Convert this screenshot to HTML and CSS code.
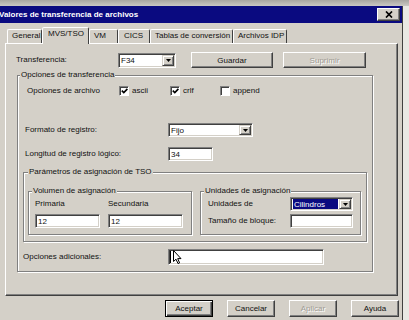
FILE: index.html
```html
<!DOCTYPE html>
<html lang="es">
<head>
<meta charset="utf-8">
<title>Valores de transferencia de archivos</title>
<link rel="stylesheet" href="styles.css">
</head>
<body>
<div class="backdrop"></div>
<div class="dialog">
  <div class="titlebar">
    <span class="title">Valores de transferencia de archivos</span>
    <button class="close" type="button"><svg width="8" height="7" viewBox="0 0 8 7"><path d="M1 0.5 L7 6.5 M7 0.5 L1 6.5" stroke="#000" stroke-width="1.7" fill="none"/></svg></button>
  </div>
  <div class="body">
    <div class="tabs">
      <div class="tab t-general">General</div>
      <div class="tab active t-mvs">MVS/TSO</div>
      <div class="tab t-vm">VM</div>
      <div class="tab t-cics">CICS</div>
      <div class="tab t-tablas">Tablas de conversión</div>
      <div class="tab t-idp">Archivos IDP</div>
    </div>
    <div class="panel">
      <div class="row row-transfer">
        <span class="lbl lbl-transfer">Transferencia:</span>
        <div class="combo combo-f34"><span class="combo-text">F34</span><span class="combo-btn"><svg width="5" height="3" viewBox="0 0 5 3"><path d="M0 0H5L2.5 3Z" fill="#000"/></svg></span></div>
        <button class="btn btn-guardar" type="button">Guardar</button>
        <button class="btn btn-suprimir" type="button" disabled>Suprimir</button>
      </div>
      <fieldset class="group group-opts">
        <legend class="legend legend-opts">Opciones de transferencia</legend>
        <div class="opts-body">
          <div class="row row-archivo">
            <span class="lbl lbl-archivo">Opciones de archivo</span>
            <span class="check check-ascii"><span class="box"><svg width="7" height="6" viewBox="0 0 7 6"><path d="M0.8 2.6 L2.8 4.6 L6.4 0.9" stroke="#000" stroke-width="1.6" fill="none"/></svg></span>ascii</span>
            <span class="check check-crlf"><span class="box"><svg width="7" height="6" viewBox="0 0 7 6"><path d="M0.8 2.6 L2.8 4.6 L6.4 0.9" stroke="#000" stroke-width="1.6" fill="none"/></svg></span>crlf</span>
            <span class="check"><span class="box"></span>append</span>
          </div>
          <div class="row row-formato">
            <span class="lbl lbl-form">Formato de registro:</span>
            <div class="combo combo-fijo"><span class="combo-text">Fijo</span><span class="combo-btn"><svg width="5" height="3" viewBox="0 0 5 3"><path d="M0 0H5L2.5 3Z" fill="#000"/></svg></span></div>
          </div>
          <div class="row row-longitud">
            <span class="lbl lbl-form">Longitud de registro lógico:</span>
            <div class="field field-34">34</div>
          </div>
          <fieldset class="group group-params">
            <legend class="legend legend-params">Parámetros de asignación de TSO</legend>
            <div class="params-body">
              <fieldset class="group group-vol">
                <legend class="legend legend-vol">Volumen de asignación</legend>
                <div class="vol-body">
                  <span class="lbl">Primaria</span>
                  <span class="lbl">Secundaria</span>
                  <div class="field">12</div>
                  <div class="field">12</div>
                </div>
              </fieldset>
              <fieldset class="group group-units">
                <legend class="legend legend-units">Unidades de asignación</legend>
                <div class="units-body">
                  <span class="lbl">Unidades de</span>
                  <div class="combo combo-cil"><span class="combo-text"><span class="selected">Cilindros</span></span><span class="combo-btn"><svg width="5" height="3" viewBox="0 0 5 3"><path d="M0 0H5L2.5 3Z" fill="#000"/></svg></span></div>
                  <span class="lbl">Tamaño de bloque:</span>
                  <div class="field"></div>
                </div>
              </fieldset>
            </div>
          </fieldset>
          <div class="row row-adic">
            <span class="lbl lbl-adic">Opciones adicionales:</span>
            <div class="field field-adic">
              <svg class="pointer" width="12" height="15" viewBox="0 0 12 15"><path d="M0.5 1 V13" stroke="#000" stroke-width="1"/><path d="M3.5 0.5 V11.5 L6 9.2 L8 13.6 L9.6 12.9 L7.7 8.6 L11 8.6 Z" fill="#fff" stroke="#000" stroke-width="1" stroke-linejoin="round"/></svg>
            </div>
          </div>
        </div>
      </fieldset>
    </div>
    <div class="buttons">
      <button class="btn btn-dlg btn-default" type="button">Aceptar</button>
      <button class="btn btn-dlg" type="button">Cancelar</button>
      <button class="btn btn-dlg btn-disabled" type="button" disabled>Aplicar</button>
      <button class="btn btn-dlg" type="button">Ayuda</button>
    </div>
  </div>
</div>
</body>
</html>
```
FILE: styles.css
```css
* { box-sizing: border-box; }
html, body { margin: 0; padding: 0; }
body {
  width: 409px;
  height: 320px;
  overflow: hidden;
  background: #e9e8e4;
  font-family: "Liberation Sans", Arial, sans-serif;
  font-size: 8px;
  color: #111;
}
.backdrop {
  height: 6px;
  background: linear-gradient(#a8a6a1, #cac8c3);
}
.dialog {
  width: 403px;
  height: 314px;
  background: #d4d0c8;
  border-right: 1px solid #404040;
}
.titlebar {
  height: 17px;
  background: #0a0a80;
  display: flex;
  align-items: center;
  justify-content: space-between;
  padding-right: 2px;
}
.title {
  color: #fff;
  font-weight: bold;
  margin-left: -1px;
  white-space: nowrap;
}
.close {
  width: 23px;
  height: 13px;
  margin: 0;
  padding: 0;
  background: #d4d0c8;
  border: 1px solid;
  border-color: #fff #404040 #404040 #fff;
  box-shadow: inset -1px -1px 0 #808080;
  display: flex;
  align-items: center;
  justify-content: center;
}
.body {
  padding: 4px 4px 0 5px;
}
.tabs {
  display: flex;
  align-items: flex-end;
  height: 16px;
  padding-left: 2px;
}
.tab {
  height: 14px;
  border: 1px solid;
  border-bottom: 0;
  border-color: #fff #404040 transparent #fff;
  border-radius: 2px 2px 0 0;
  padding: 0 0 0 4px;
  line-height: 11px;
  white-space: nowrap;
}
.tab.active {
  height: 17px;
  margin-bottom: -1px;
  background: #d4d0c8;
  position: relative;
  z-index: 1;
}
.t-general { width: 35px; }
.t-mvs { width: 47px; padding-left: 5px; }
.t-vm { width: 29px; }
.t-cics { width: 32px; padding-left: 5px; }
.t-tablas { width: 83px; }
.t-idp { width: 54px; }
.panel {
  height: 253px;
  border: 1px solid;
  border-color: #fff #404040 #404040 #fff;
  box-shadow: inset -1px -1px 0 #808080;
  padding: 8px 0 0 10px;
}
.row {
  display: flex;
  align-items: center;
}
.lbl { white-space: nowrap; line-height: 10px; }
.row-transfer { height: 16px; }
.lbl-transfer { width: 102px; }
.combo {
  display: flex;
  height: 14px;
  background: #fff;
  border: 1px solid;
  border-color: #808080 #fff #fff #808080;
  box-shadow: inset 1px 1px 0 #404040, inset -1px -1px 0 #d4d0c8;
  padding: 1px;
}
.combo-text {
  flex: 1;
  display: flex;
  align-items: center;
  padding-left: 1px;
  white-space: nowrap;
}
.combo-btn {
  width: 12px;
  background: #d4d0c8;
  border: 1px solid;
  border-color: #d4d0c8 #404040 #404040 #d4d0c8;
  box-shadow: inset 1px 1px 0 #fff, inset -1px -1px 0 #808080;
  display: flex;
  align-items: center;
  justify-content: center;
}
.combo-f34 { width: 58px; height: 15px; }
.combo-fijo { width: 85px; }
.combo-cil { width: 63px; }
.selected {
  background: #0a0a80;
  color: #fff;
  align-self: stretch;
  flex: 1;
  margin-right: 1px;
  padding-left: 1px;
  display: flex;
  align-items: center;
}
.btn {
  margin: 0;
  padding: 0;
  background: #d4d0c8;
  border: 1px solid;
  border-color: #fff #404040 #404040 #fff;
  box-shadow: inset -1px -1px 0 #808080;
  font: inherit;
  color: #111;
}
.btn-guardar { width: 82px; height: 16px; margin-left: 15px; }
.btn-suprimir {
  width: 83px;
  height: 16px;
  margin-left: 10px;
  color: #a09c94;
  text-shadow: 1px 1px 0 #fff;
}
.group {
  margin: 0;
  padding: 0;
  min-width: 0;
  border: 1px solid #808080;
  box-shadow: inset 1px 1px 0 #fff, 1px 1px 0 #fff;
}
.legend {
  padding: 0 1px;
  line-height: 10px;
  background: #d4d0c8;
  white-space: nowrap;
}
.group-opts { width: 356px; margin: 2px 0 0 1px; }
.legend-opts { margin-left: 2px; }
.opts-body { padding: 0 0 6px 5px; }
.row-archivo { margin-top: 6px; height: 10px; }
.lbl-archivo { width: 92px; margin-left: 4px; }
.check { display: flex; align-items: center; width: 51px; line-height: 10px; }
.check-crlf { width: 50px; }
.box {
  width: 10px;
  height: 10px;
  margin-right: 3px;
  background: #fff;
  border: 1px solid;
  border-color: #808080 #fff #fff #808080;
  box-shadow: inset 1px 1px 0 #404040;
  display: flex;
  align-items: center;
  justify-content: center;
}
.row-formato { margin-top: 27px; height: 14px; }
.row-longitud { margin-top: 10px; height: 14px; }
.lbl-form { width: 143px; margin-left: 2px; }
.field {
  height: 14px;
  background: #fff;
  border: 1px solid;
  border-color: #808080 #fff #fff #808080;
  box-shadow: inset 1px 1px 0 #404040, inset -1px -1px 0 #d4d0c8;
  padding-left: 2px;
  display: flex;
  align-items: center;
}
.field-34 { width: 45px; }
.group-params { width: 344px; margin-top: 6px; }
.legend-params { margin-left: 4px; }
.params-body { display: flex; gap: 8px; padding: 9px 0 6px 4px; }
.group-vol { width: 164px; }
.legend-vol { margin-left: 3px; }
.vol-body {
  display: grid;
  grid-template-columns: 65px 75px;
  grid-template-rows: 10px 14px;
  column-gap: 8px;
  row-gap: 5px;
  padding: 3px 0 6px 6px;
}
.group-units { width: 161px; }
.legend-units { margin-left: 3px; }
.units-body {
  display: grid;
  grid-template-columns: 82px 63px;
  grid-template-rows: 14px 14px;
  row-gap: 3px;
  align-items: center;
  padding: 1px 0 6px 7px;
}
.row-adic { margin-top: 7px; height: 16px; }
.lbl-adic { width: 145px; }
.field-adic { width: 156px; height: 16px; position: relative; }
.pointer { position: absolute; left: 1px; top: 0; }
.buttons {
  display: flex;
  justify-content: flex-end;
  gap: 14px;
  margin-top: 4px;
  margin-right: -1px;
}
.btn-dlg { width: 48px; height: 17px; }
.btn-default {
  border: 1px solid #000;
  box-shadow: inset 1px 1px 0 #fff, inset -1px -1px 0 #404040, inset -2px -2px 0 #808080;
}
.btn-disabled { color: #a09c94; text-shadow: 1px 1px 0 #fff; }
```
